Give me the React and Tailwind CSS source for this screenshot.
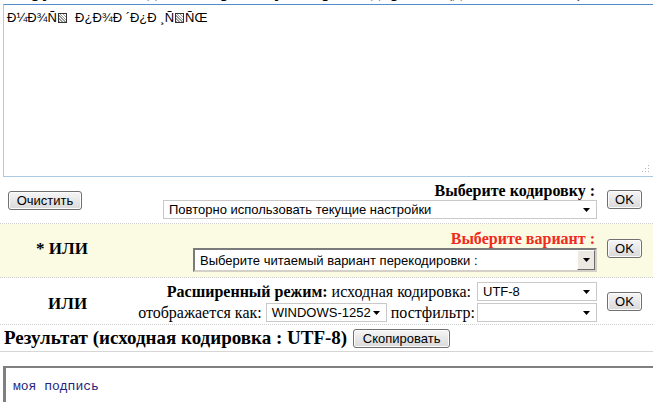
import React from "react";

const sans = { fontFamily: '"Liberation Sans", Arial, sans-serif' };
const serif = { fontFamily: '"Liberation Serif", "Times New Roman", serif' };
const mono = { fontFamily: '"Liberation Mono", "Courier New", monospace' };

function Btn({ children, className = "" }) {
  return (
    <div
      style={sans}
      className={`flex items-center justify-center h-[19px] rounded-[3px] border border-[#707070] bg-gradient-to-b from-[#f6f6f6] to-[#d9d9d9] text-[13px] text-black leading-none shadow-[inset_0_0_0_1px_#fcfcfc] ${className}`}
    >
      {children}
    </div>
  );
}

function Arrow() {
  return (
    <svg width="7" height="4" viewBox="0 0 7 4" className="shrink-0">
      <path d="M0 0H7L3.5 4Z" fill="#000" />
    </svg>
  );
}

function Sel({ children, className = "" }) {
  return (
    <div
      style={sans}
      className={`flex items-center justify-between h-[19px] border border-[#c9c9c9] bg-white pl-[5px] pr-[6px] text-[13px] text-black leading-none ${className}`}
    >
      <span className="whitespace-nowrap">{children}</span>
      <Arrow />
    </div>
  );
}

function Box() {
  return (
    <span className="inline-block w-[9px] h-[10px] border border-[#333] mx-[1px] align-[-1px] bg-[repeating-linear-gradient(45deg,#999_0_1px,#fff_1px_2px)]" />
  );
}

export default function App() {
  return (
    <div className="w-[653px] h-[410px] overflow-hidden bg-white text-black">
      {/* cropped heading remnant */}
      <div className="h-[3px] overflow-hidden">
        <div style={serif} className="-mt-[19px] pl-[4px] text-[19px] font-bold leading-[20px] whitespace-nowrap">
          Загрузите текст, для которого нужна раскодировка (до 3000 знаков)
        </div>
      </div>

      {/* textarea */}
      <div className="relative ml-[3px] mt-[1px] w-[652px] h-[173px] border border-[#a9cbe6] border-t-[#4f8ccb]">
        <div style={sans} className="pl-[3px] pt-[5px] text-[13px] leading-[15px] whitespace-nowrap">
          Ð¼Ð¾Ñ<Box />&nbsp; Ð¿Ð¾Ð ´Ð¿Ð ¸Ñ<Box />ÑŒ
        </div>
        <svg width="9" height="9" viewBox="0 0 9 9" className="absolute right-[4px] bottom-[3px]">
          <g fill="#b5b5b5">
            <rect x="7" y="1" width="1" height="1" />
            <rect x="4" y="4" width="1" height="1" />
            <rect x="7" y="4" width="1" height="1" />
            <rect x="1" y="7" width="1" height="1" />
            <rect x="4" y="7" width="1" height="1" />
            <rect x="7" y="7" width="1" height="1" />
          </g>
        </svg>
      </div>

      {/* row 1 */}
      <div className="flex h-[47px] border-b border-dotted border-[#cfcfcf]">
        <div className="w-[156px] pl-[8px] pt-[14px]">
          <Btn className="w-[74px]">Очистить</Btn>
        </div>
        <div className="flex-1 flex flex-col items-end pt-[5px]">
          <div style={serif} className="text-[16px] font-bold leading-[18px] pr-[2px]">
            Выберите кодировку :
          </div>
          <Sel className="w-[434px]">Повторно использовать текущие настройки</Sel>
        </div>
        <div className="w-[56px] pl-[10px] pt-[13px]">
          <Btn className="w-[35px]">OK</Btn>
        </div>
      </div>

      {/* row 2 yellow */}
      <div className="flex h-[54px] bg-[#fbfbe4] border-b border-dotted border-[#cfcfcf]">
        <div style={serif} className="w-[186px] pl-[36px] pt-[15px] text-[17px] font-bold leading-[19px]">
          * ИЛИ
        </div>
        <div className="flex-1 flex flex-col items-end pt-[6px]">
          <div style={serif} className="text-[16px] font-bold leading-[18px] text-[#f02a1c] pr-[2px]">
            Выберите вариант :
          </div>
          <div
            style={sans}
            className="flex items-center justify-between w-[404px] h-[24px] border-2 border-t-[#7a7a7a] border-l-[#7a7a7a] border-b-[#d4d0c8] border-r-[#d4d0c8] bg-white text-[13px] leading-none"
          >
            <span className="pl-[5px] whitespace-nowrap">Выберите читаемый вариант перекодировки :</span>
            <div className="flex items-center justify-center w-[18px] h-[20px] bg-[#ece9e3] border border-t-white border-l-white border-b-[#6c6c6c] border-r-[#6c6c6c]">
              <Arrow />
            </div>
          </div>
        </div>
        <div className="w-[56px] pl-[10px] pt-[15px]">
          <Btn className="w-[35px]">OK</Btn>
        </div>
      </div>

      {/* row 3 */}
      <div className="flex h-[47px] border-b border-dotted border-[#cfcfcf]">
        <div style={serif} className="w-[130px] pl-[48px] pt-[16px] text-[17px] font-bold leading-[19px]">
          ИЛИ
        </div>
        <div className="flex-1 flex flex-col items-end pt-[4px] gap-[2px]">
          <div className="flex items-center">
            <span style={serif} className="text-[16px] leading-[18px] whitespace-nowrap">
              <b>Расширенный режим:</b> исходная кодировка:
            </span>
            <Sel className="w-[120px] ml-[6px]">UTF-8</Sel>
          </div>
          <div className="flex items-center">
            <span style={serif} className="text-[16px] leading-[18px] whitespace-nowrap">отображается как:</span>
            <Sel className="w-[121px] ml-[4px]">WINDOWS-1252</Sel>
            <span style={serif} className="text-[16px] leading-[18px] whitespace-nowrap ml-[4px]">постфильтр:</span>
            <Sel className="w-[120px] ml-[2px]"></Sel>
          </div>
        </div>
        <div className="w-[56px] pl-[10px] pt-[14px]">
          <Btn className="w-[35px]">OK</Btn>
        </div>
      </div>

      {/* result header */}
      <div className="flex items-center h-[27px] border-b border-[#d6d6d6] pl-[4px]">
        <div style={serif} className="text-[19px] font-bold leading-[22px] whitespace-nowrap">
          Результат (исходная кодировка : UTF-8)
        </div>
        <Btn className="w-[97px] ml-[6px]">Скопировать</Btn>
      </div>

      {/* result box */}
      <div className="mt-[14px] ml-[3px] w-[660px] h-[36px] border-t-2 border-l-[3px] border-[#808080] bg-white">
        <div style={mono} className="pl-[7px] pt-[11px] text-[13px] leading-[15px] text-[#24247e]">
          моя подпись
        </div>
      </div>
    </div>
  );
}
